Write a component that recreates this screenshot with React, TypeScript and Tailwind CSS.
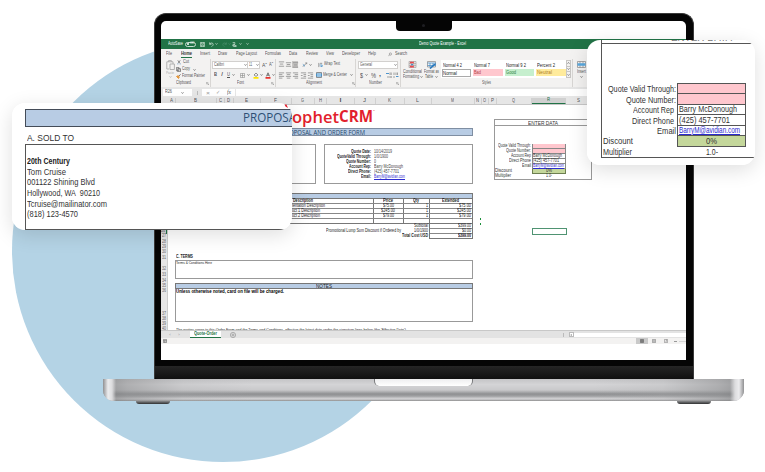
import { useLayoutEffect, useRef } from 'react';
import type { ReactNode } from 'react';

/* One line of text squeezed or stretched to the width of its own box. */
function T({ c, children }: { c: string; children: ReactNode }) {
  const outer = useRef<HTMLSpanElement>(null);
  const inner = useRef<HTMLSpanElement>(null);
  useLayoutEffect(() => {
    const o = outer.current;
    const i = inner.current;
    if (!o || !i) return;
    i.style.transform = 'none';
    const ratio = o.getBoundingClientRect().width / i.getBoundingClientRect().width;
    i.style.transform = `scaleX(${ratio})`;
  });
  return (
    <span ref={outer} className={`block flex-none leading-none ${c}`}>
      <span ref={inner} className="inline-block origin-left whitespace-nowrap align-top">
        {children}
      </span>
    </span>
  );
}

const Caret = ({ c = '' }: { c?: string }) => (
  <svg viewBox="0 0 4 3" className={`h-[2px] w-[3px] flex-none ${c}`} fill="none" stroke="currentColor" strokeWidth="1">
    <path d="M0.5 0.5 2 2.2 3.5 0.5" />
  </svg>
);

const Lines = ({ c = '', d }: { c?: string; d: string }) => (
  <svg viewBox="0 0 8 8" className={`h-[7px] w-[7px] flex-none ${c}`} fill="none" stroke="#888" strokeWidth="0.9">
    <path d={d} />
  </svg>
);

const Launcher = ({ c = '' }: { c?: string }) => (
  <svg viewBox="0 0 4 4" className={`h-[3px] w-[3px] flex-none ${c}`} fill="none" stroke="#888" strokeWidth="0.7">
    <path d="M0.5 3V0.5H3M1.5 1.5 3.5 3.5V2M3.5 3.5H2" />
  </svg>
);

function TitleBar() {
  return (
    <div className="flex h-[10px] flex-none items-center bg-[#217346] text-white">
      <T c="ml-[7px] w-[15px] text-[4.6px]">AutoSave</T>
      <span className="ml-[2px] flex h-[5px] w-[11px] items-center rounded-full border border-[#c8ddd0] pl-[1px]">
        <span className="h-[2px] w-[2px] rounded-full bg-white" />
        <T c="ml-[1px] w-[4px] text-[3.4px]">Off</T>
      </span>
      <svg viewBox="0 0 6 6" className="ml-[4px] h-[5px] w-[5px]" fill="none" stroke="#d3e6da" strokeWidth="0.8">
        <path d="M0.5 0.5H5.5V5.5H0.5ZM1.6 0.5V2.3H4.4V0.5M1.6 5.5V3.7H4.4V5.5" />
      </svg>
      <svg viewBox="0 0 6 6" className="ml-[4px] h-[5px] w-[5px]" fill="none" stroke="#d3e6da" strokeWidth="0.9">
        <path d="M0.8 0.5V2.7H3M0.8 2.7C2 0.5 5 0.7 5 3C5 4 4 5 3 5.7" />
      </svg>
      <Caret c="ml-[1px] text-[#d3e6da]" />
      <svg viewBox="0 0 6 6" className="ml-[4px] h-[5px] w-[5px]" fill="none" stroke="#4f9370" strokeWidth="0.8">
        <path d="M5.2 0.5V2.7H3M5.2 2.7C4 0.5 1 0.7 1 3C1 4 2 5 3 5.7" />
      </svg>
      <Caret c="ml-[1px] text-[#4f9370]" />
      <svg viewBox="0 0 6 6" className="ml-[1px] h-[5px] w-[5px]" fill="none" stroke="#d3e6da" strokeWidth="0.9">
        <path d="M0.8 0.8H3.5V2M2 5.5V2.5H3V4L5 4.2V5.5ZM1 3V5" />
      </svg>
      <Caret c="ml-[2px] text-[#d3e6da]" />
      <Caret c="ml-[4px] text-[#d3e6da]" />
      <T c="ml-[170px] w-[47px] text-[4.6px]">Demo Quote Example  -  Excel</T>
    </div>
  );
}

function MenuTabs() {
  return (
    <div className="flex h-[10px] flex-none items-center bg-[#f3f2f1] text-[4.9px] text-[#555]">
      <T c="ml-[5px] w-[6px]">File</T>
      <span className="ml-[9px] flex h-[8px] items-center border-b border-[#217346] pt-[1px] font-semibold text-[#333]">
        <T c="w-[11px]">Home</T>
      </span>
      <T c="ml-[8px] w-[10px]">Insert</T>
      <T c="ml-[8px] w-[9px]">Draw</T>
      <T c="ml-[9px] w-[21px]">Page Layout</T>
      <T c="ml-[8px] w-[16px]">Formulas</T>
      <T c="ml-[8px] w-[8px]">Data</T>
      <T c="ml-[9px] w-[12px]">Review</T>
      <T c="ml-[8px] w-[8px]">View</T>
      <T c="ml-[8px] w-[18px]">Developer</T>
      <T c="ml-[8px] w-[8px]">Help</T>
      <svg viewBox="0 0 6 6" className="ml-[12px] h-[5px] w-[4px]" fill="none" stroke="#666" strokeWidth="0.7">
        <circle cx="3.6" cy="2.3" r="1.7" />
        <path d="M2.3 3.6 0.4 5.6" />
      </svg>
      <T c="ml-[3px] w-[12px]">Search</T>
    </div>
  );
}

function ClipboardGroup() {
  return (
    <div className="flex w-[50px] flex-none flex-col border-r border-[#d8d6d4]">
      <div className="flex h-[21px]">
        <div className="ml-[5px] flex w-[9px] flex-col items-center">
          <svg viewBox="0 0 9 10" className="mt-[1px] h-[10px] w-[9px]" fill="none" stroke="#aaa" strokeWidth="0.9">
            <path d="M3 9H0.8V1.8H7V4M2.5 1.8V0.6H5.4V1.8M4 4H8.4V9.5H4Z" />
          </svg>
          <T c="mt-[1px] w-[8px] text-[4.4px] text-[#aaa]">Paste</T>
          <Caret c="mt-[1px] text-[#aaa]" />
        </div>
        <div className="ml-[1px] flex flex-col text-[4.8px] text-[#555]">
          <div className="flex h-[7px] items-center">
            <svg viewBox="0 0 5 6" className="ml-[1px] h-[5px] w-[4px]" fill="none" strokeWidth="0.9">
              <path d="M1 0.3 3.6 4M4 0.3 1.4 4" stroke="#666" />
              <path d="M0.6 4.8H1.6M3.4 4.8H4.5" stroke="#2f7cc4" />
            </svg>
            <T c="ml-[2px] w-[6px]">Cut</T>
          </div>
          <div className="flex h-[7px] items-center">
            <svg viewBox="0 0 6 6" className="h-[5px] w-[5px]" fill="none" stroke="#666" strokeWidth="0.9">
              <path d="M0.5 0.5H3.5V4.5H0.5ZM2 2H5.4V5.6H2Z" />
            </svg>
            <T c="ml-[1px] w-[8px]">Copy</T>
            <Caret c="ml-[3px]" />
          </div>
          <div className="flex h-[7px] items-center">
            <svg viewBox="0 0 6 6" className="h-[5px] w-[5px]" fill="none" strokeWidth="1">
              <path d="M0.6 3 3 5.4 4 3.4 2.4 2Z" fill="#f2a33a" stroke="#e08a2a" />
              <path d="M3.3 2.6 5.4 0.5" stroke="#555" />
            </svg>
            <T c="ml-[1px] w-[23px]">Format Painter</T>
          </div>
        </div>
      </div>
      <div className="flex h-[7px] items-center text-[4.6px] text-[#555]">
        <T c="ml-[15px] w-[15px]">Clipboard</T>
        <Launcher c="ml-[15px]" />
      </div>
    </div>
  );
}

function FontGroup() {
  return (
    <div className="flex w-[65px] flex-none flex-col border-r border-[#d8d6d4] text-[4.6px] text-[#555]">
      <div className="mt-[2px] flex h-[8px] items-center">
        <span className="ml-[1px] flex h-[8px] w-[36px] items-center border border-[#d2d0ce] bg-white">
          <T c="ml-[1px] w-[10px]">Calibri</T>
          <Caret c="ml-[20px]" />
        </span>
        <span className="flex h-[8px] w-[12px] items-center border border-l-0 border-[#d2d0ce] bg-white">
          <T c="ml-[1px] w-[3px]">11</T>
          <Caret c="ml-[4px]" />
        </span>
        <T c="ml-[2px] w-[5px] text-[6px]">Aˆ</T>
        <T c="ml-[2px] w-[4px] text-[5.4px]">Aˇ</T>
      </div>
      <div className="mt-[1px] flex h-[10px] items-center">
        <T c="ml-[3px] w-[3px] text-[5.6px] font-bold">B</T>
        <T c="ml-[4px] w-[2px] text-[5.6px] italic">I</T>
        <span className="[&_span]:underline"><T c="ml-[4px] w-[3px] text-[5.6px]">U</T></span>
        <Caret c="ml-[2px]" />
        <svg viewBox="0 0 6 6" className="ml-[5px] h-[5px] w-[5px]" fill="none" stroke="#888" strokeWidth="0.7">
          <path d="M0.5 0.5H5.5V5.5H0.5ZM3 0.5V5.5M0.5 3H5.5" />
        </svg>
        <Caret c="ml-[2px]" />
        <svg viewBox="0 0 6 7" className="ml-[3px] h-[7px] w-[6px]" fill="none" strokeWidth="0.8">
          <path d="M1 3 3 1 5 3 3 4.4Z" stroke="#777" />
          <path d="M0.5 5.8H5.5" stroke="#ffe600" strokeWidth="1.8" />
        </svg>
        <Caret c="ml-[1px]" />
        <svg viewBox="0 0 6 7" className="ml-[2px] h-[7px] w-[6px]" fill="none" strokeWidth="0.8">
          <path d="M1.4 4.4 3 0.8 4.6 4.4M2 3.2H4" stroke="#555" />
          <path d="M0.5 5.8H5.5" stroke="#e8322c" strokeWidth="1.8" />
        </svg>
        <Caret c="ml-[1px]" />
      </div>
      <div className="flex h-[7px] items-center">
        <T c="ml-[26px] w-[7px]">Font</T>
        <Launcher c="ml-[27px]" />
      </div>
    </div>
  );
}

function AlignmentGroup() {
  return (
    <div className="flex w-[80px] flex-none flex-col border-r border-[#d8d6d4] text-[4.7px] text-[#555]">
      <div className="mt-[1px] flex h-[9px] items-center">
        <Lines c="ml-[2px]" d="M1 1H7M2 3.5H6M1 6H7" />
        <Lines d="M1 2H7M2 4H6M1 6H7" />
        <span className="flex h-[7px] w-[6px] items-center bg-[#c8c6c4]">
          <Lines d="M1 2H7M2 4.5H6M1 7H7" />
        </span>
        <svg viewBox="0 0 7 7" className="ml-[4px] h-[6px] w-[6px]" fill="none" strokeWidth="1">
          <path d="M1 5.5 5.5 1M4 1H5.5V2.5" stroke="#888" />
          <path d="M1 2.8 3.4 5" stroke="#3a8ac8" />
        </svg>
        <Caret c="ml-[1px]" />
        <svg viewBox="0 0 6 6" className="ml-[6px] h-[6px] w-[5px]" fill="none" strokeWidth="0.9">
          <path d="M1 0.5V5.5M2.5 1H5" stroke="#777" />
          <path d="M2 3H5V4.8H3" stroke="#3a8ac8" />
        </svg>
        <T c="ml-[1px] w-[16px]">Wrap Text</T>
      </div>
      <div className="mt-[1px] flex h-[10px] items-center">
        <Lines c="ml-[2px]" d="M1 1H7M1 3H5M1 5H7M1 7H5" />
        <Lines d="M1 1H7M2 3H6M1 5H7M2 7H6" />
        <Lines d="M1 1H7M3 3H7M1 5H7M3 7H7" />
        <Lines c="ml-[1px]" d="M1 1H7M4 3H7M4 5H7M1 7H7M3 4H1" />
        <Lines d="M1 1H7M4 3H7M4 5H7M1 7H7M1 4H3" />
        <svg viewBox="0 0 6 6" className="ml-[2px] h-[6px] w-[6px]" fill="#cfe6f7" strokeWidth="0.8">
          <path d="M0.5 0.5H5.5V5.5H0.5Z" stroke="#777" />
          <path d="M0.5 2H5.5V4H0.5Z" stroke="#3a8ac8" />
        </svg>
        <T c="ml-[1px] w-[24px]">Merge & Center</T>
        <Caret c="ml-[3px]" />
      </div>
      <div className="flex h-[7px] items-center">
        <T c="ml-[30px] w-[16px]">Alignment</T>
        <Launcher c="ml-[30px]" />
      </div>
    </div>
  );
}

function NumberGroup() {
  return (
    <div className="flex w-[45px] flex-none flex-col border-r border-[#d8d6d4] text-[4.6px] text-[#555]">
      <div className="mt-[2px] flex h-[8px] items-center">
        <span className="ml-[2px] flex h-[8px] w-[40px] items-center border border-[#d2d0ce] bg-white">
          <T c="ml-[1px] w-[12px]">General</T>
          <Caret c="ml-[22px]" />
        </span>
      </div>
      <div className="mt-[1px] flex h-[10px] items-center">
        <T c="ml-[4px] w-[3px] text-[7px]">$</T>
        <Caret c="ml-[2px]" />
        <T c="ml-[3px] w-[5px] text-[7px]">%</T>
        <T c="ml-[3px] mb-[3px] w-[2px] text-[8px] font-bold">,</T>
        <svg viewBox="0 0 13 6" className="ml-[5px] h-[6px] w-[13px]" fill="none" strokeWidth="0.9">
          <path d="M0 1.5H3M10 4.5H12.5" stroke="#3a8ac8" />
          <path d="M4 0.5V3M5.2 0.5V3M2 4V6M4 4V6M5.2 4V6M8 0.5V3M10 0.5V3M11.5 0.5V3M8 4V6" stroke="#999" />
        </svg>
      </div>
      <div className="flex h-[7px] items-center">
        <T c="ml-[13px] w-[13px]">Number</T>
        <Launcher c="ml-[14px]" />
      </div>
    </div>
  );
}

function StylesGroup() {
  return (
    <div className="flex w-[172px] flex-none flex-col border-r border-[#d8d6d4] text-[4.6px] text-[#555]">
      <div className="flex h-[21px]">
        <div className="ml-[2px] flex w-[20px] flex-col items-center">
          <svg viewBox="0 0 9 8" className="mt-[2px] h-[7px] w-[9px] flex-none" fill="none" strokeWidth="0.6">
            <path d="M0.5 0.5H8.5V7.5H0.5ZM3 0.5V7.5M6 0.5V7.5M0.5 3H8.5M0.5 5.3H8.5" stroke="#888" />
            <path d="M1.5 1.7H6M1.5 6.4H6" stroke="#ea4a4f" strokeWidth="1.9" />
            <path d="M3 4.1H5" stroke="#3a8ac8" strokeWidth="1.6" />
          </svg>
          <T c="mt-[2px] w-[19px]">Conditional</T>
          <span className="flex items-center">
            <T c="w-[16px]">Formatting</T>
            <Caret c="ml-[1px]" />
          </span>
        </div>
        <div className="ml-[1px] flex w-[16px] flex-col items-center">
          <svg viewBox="0 0 9 8" className="mt-[2px] h-[8px] w-[9px] flex-none" fill="none" strokeWidth="0.7">
            <path d="M0.5 0.5H8.5V6H0.5Z" stroke="#888" />
            <path d="M0.5 2H8.5V4.5H0.5M3 2V6M6 2V6" stroke="#3a8ac8" />
            <path d="M3 7.5 8 3" stroke="#2777bd" strokeWidth="1.6" />
          </svg>
          <T c="mt-[1px] w-[15px]">Format as</T>
          <span className="flex items-center">
            <T c="w-[8px]">Table</T>
            <Caret c="ml-[2px]" />
          </span>
        </div>
        <div className="ml-[1px] mt-[1px] grid h-[18px] w-[125px] grid-cols-4 grid-rows-2 gap-x-[2px] bg-white py-[1px] pl-[1px] text-[5px] text-[#222]">
          <span className="flex items-center pl-[1px]"><T c="w-[19px]">Normal 4 2</T></span>
          <span className="flex items-center pl-[1px]"><T c="w-[16px]">Normal 7</T></span>
          <span className="flex items-center pl-[1px]"><T c="w-[20px]">Normal 9 2</T></span>
          <span className="flex items-center pl-[1px]"><T c="w-[18px]">Percent 2</T></span>
          <span className="flex items-center border border-[#aaa]"><T c="w-[14px]">Normal</T></span>
          <span className="mb-[1px] flex items-center bg-[#ffc7ce] pl-[1px] text-[#b33c46]"><T c="w-[7px]">Bad</T></span>
          <span className="mb-[1px] flex items-center bg-[#c6efce] pl-[1px] text-[#2f8040]"><T c="w-[10px]">Good</T></span>
          <span className="mb-[1px] flex items-center bg-[#ffeb9c] pl-[1px] text-[#b07d24]"><T c="w-[15px]">Neutral</T></span>
        </div>
        <div className="mt-[1px] flex h-[18px] w-[5px] flex-col divide-y divide-[#c8c6c4] border border-[#c8c6c4]">
          <span className="flex flex-1 items-center justify-center"><Caret c="rotate-180" /></span>
          <span className="flex flex-1 items-center justify-center"><Caret /></span>
          <span className="flex flex-1 items-center justify-center"><Caret /></span>
        </div>
      </div>
      <div className="flex h-[7px] items-center">
        <T c="ml-[81px] w-[9px]">Styles</T>
      </div>
    </div>
  );
}

function Ribbon() {
  return (
    <div className="flex h-[28px] flex-none overflow-hidden bg-[#f3f2f1]">
      <ClipboardGroup />
      <FontGroup />
      <AlignmentGroup />
      <NumberGroup />
      <StylesGroup />
      <div className="ml-[4px] flex w-[10px] flex-col items-center text-[4.8px] text-[#555]">
        <svg viewBox="0 0 9 7" className="mt-[2px] h-[7px] w-[9px]" fill="none" strokeWidth="0.7">
          <path d="M0.5 0.5H8.5V6.5H0.5ZM3 0.5V6.5M6 0.5V6.5" stroke="#888" />
          <path d="M0.5 3.5H8.5" stroke="#58a9e0" strokeWidth="2.5" />
        </svg>
        <T c="mt-[2px] w-[9px]">Insert</T>
        <Caret c="mt-[1px]" />
      </div>
    </div>
  );
}

function FormulaBar() {
  return (
    <div className="flex h-[11px] flex-none items-center bg-[#e6e6e6] text-[4.6px] text-[#555]">
      <span className="ml-[2px] flex h-[7px] w-[29px] items-center bg-white">
        <T c="ml-[2px] w-[7px]">R26</T>
        <Caret c="ml-[9px]" />
      </span>
      <span className="ml-[5px] h-[4px] w-px bg-[#bbb]" />
      <span className="ml-[4px] flex h-[7px] w-[33px] items-center bg-white text-[#999]">
        <T c="ml-[4px] w-[4px] text-[6px]">×</T>
        <T c="ml-[6px] w-[4px] text-[5px]">✓</T>
        <span className="font-['Liberation_Serif',serif] italic text-[#555]"><T c="ml-[7px] w-[4px] text-[5.6px]">fx</T></span>
      </span>
      <span className="ml-px h-[7px] flex-1 bg-white" />
    </div>
  );
}

const columns: [string, string][] = [
  ['A', 'w-[8px]'], ['B', 'w-[41px]'], ['C', 'w-[8px]'], ['D', 'w-[9px]'], ['E', 'w-[27px]'],
  ['F', 'w-[31px]'], ['G', 'w-[23px]'], ['H', 'w-[12px]'], ['I', 'w-[28px]'], ['J', 'w-[21px]'],
  ['K', 'w-[29px]'], ['L', 'w-[27px]'], ['M', 'w-[43px]'], ['N', 'w-[7px]'], ['O', 'w-[7px]'],
  ['P', 'w-[8px]'], ['Q', 'w-[35px]'], ['R', 'w-[34px]'], ['S', 'w-[26px]'], ['T', 'w-[40px]'],
];

function ColumnHeader() {
  return (
    <div className="flex h-[7px] flex-none border-b border-[#c8c8c8] bg-[#e6e6e6] pl-[7px] text-[4.8px] text-[#555]">
      {columns.map(([name, w]) => (
        <span
          key={name}
          className={`flex flex-none items-center justify-center border-r border-[#d0d0d0] ${w} ${
            name === 'R' ? 'border-b border-b-[#217346] bg-[#d0d0d0] text-[#217346]' : ''
          }`}
        >
          <T c="w-[3px]">{name}</T>
        </span>
      ))}
    </div>
  );
}

const rowNumbers: [number, string][] = [
  [25, 'h-[124px]'], [26, 'h-[5px]'], [27, 'h-[5px]'], [28, 'h-[6px]'], [29, 'h-[5px]'], [30, 'h-[5px]'],
  [31, 'h-[6px]'], [32, 'h-[11px]'], [33, 'h-[6px]'], [34, 'h-[6px]'], [35, 'h-[5px]'], [36, 'h-[5px]'],
  [37, 'h-[23px]'], [38, 'h-[5px]'], [39, 'h-[5px]'], [40, 'h-[5px]'],
];

const quoteInfo: [string, string, string, string][] = [
  ['Quote Date:', 'w-[20px]', '10/14/2019', 'w-[18px]'],
  ['QuoteValid Through:', 'w-[34px]', '1/0/1900', 'w-[14px]'],
  ['Quote Number:', 'w-[25px]', '0', 'w-[2px]'],
  ['Account Rep:', 'w-[22px]', 'Barry McDonough', 'w-[29px]'],
  ['Direct Phone:', 'w-[23px]', '(425) 457-7701', 'w-[25px]'],
  ['Email:', 'w-[10px]', 'BarryM@avidian.com', 'w-[31px]'],
];

const items: [string, string, string, string][] = [
  ['Implementation Description', '$75.00', '1', '$75.00'],
  ['Product 1 Description', '$245.00', '1', '$245.00'],
  ['Product 2 Description', '$79.00', '1', '$79.00'],
];

function OrderForm() {
  return (
    <div className="flex w-[298px] flex-none flex-col text-[4.7px] text-[#222]">
      <div className="flex h-[23px] flex-none items-center pl-[117px] font-['Open_Sans',sans-serif] text-[#e21f2d]">
        <T c="mt-[1px] w-[47px] text-[16px] font-semibold">ophet</T>
        <T c="mt-[1px] w-[34px] text-[15.5px] font-bold">CRM</T>
        <T c="mb-[9px] w-[2px] text-[2px]">™</T>
      </div>
      <div className="flex h-[8px] flex-none items-center justify-center border border-[#7f8ea2] bg-[#b8cce4] font-['Open_Sans',sans-serif] text-[#24466b]">
        <T c="w-[83px] text-[7px]">PROPOSAL AND ORDER FORM</T>
      </div>
      <div className="mt-[8px] flex h-[40px] flex-none gap-[8px]">
        <div className="w-[141px] border border-[#999]" />
        <div className="w-[149px] border border-[#999] pt-[5px]">
          {quoteInfo.map(([label, lw, value, vw], n) => (
            <div key={label} className="flex h-[5px] items-center">
              <span className="flex w-[46px] justify-end font-bold"><T c={lw}>{label}</T></span>
              <span className={`ml-[3px] ${n === 5 ? 'text-[#2b2bd0] [&_span]:underline' : 'text-[#444]'}`}><T c={vw}>{value}</T></span>
            </div>
          ))}
        </div>
      </div>
      <div className="mt-[9px] flex h-[31px] flex-none flex-col border border-[#777]">
        <div className="h-[5px] flex-none border-b border-[#777] bg-[#b8cce4]" />
        <div className="flex h-[5px] flex-none border-b border-[#888] font-bold">
          <span className="flex w-[198px] items-center justify-end border-r border-[#777] pr-[60px]"><T c="w-[20px]">Description</T></span>
          <span className="flex w-[30px] items-center justify-center border-r border-[#777]"><T c="w-[10px]">Price</T></span>
          <span className="flex w-[26px] items-center justify-center border-r border-[#777]"><T c="w-[6px]">Qty</T></span>
          <span className="flex flex-1 items-center justify-center"><T c="w-[17px]">Extended</T></span>
        </div>
        {items.map(([name, price, qty, total], n) => (
          <div key={name} className="flex h-[5px] flex-none border-b border-[#888]">
            <span className="flex w-[198px] items-center border-r border-[#777] pl-[105px]">
              <T c={n === 0 ? 'w-[44px]' : 'ml-[3px] w-[36px]'}>{name}</T>
            </span>
            <span className="flex w-[30px] items-center justify-center border-r border-[#777]"><T c={n === 1 ? 'w-[14px]' : 'w-[11px]'}>{price}</T></span>
            <span className="flex w-[26px] items-center justify-end border-r border-[#777] pr-[1px]"><T c="w-[2px]">{qty}</T></span>
            <span className="flex flex-1 items-center justify-end pr-[1px]"><T c={n === 1 ? 'w-[14px]' : 'w-[12px]'}>{total}</T></span>
          </div>
        ))}
        <div className="flex flex-1">
          <span className="w-[198px] border-r border-[#777]" />
          <span className="w-[30px] border-r border-[#777]" />
          <span className="w-[26px] border-r border-[#777]" />
        </div>
      </div>
      <div className="flex h-[15px] flex-none justify-end">
        <div className="flex flex-col items-end pr-[1px]">
          <span className="flex h-[5px] items-center"><T c="w-[14px]">Subtotal</T></span>
          <span className="flex h-[5px] items-center">
            <T c="w-[75px]">Promotional Lump Sum Discount if Ordered by</T>
            <T c="ml-[13px] w-[14px]">1/0/1900</T>
          </span>
          <span className="flex h-[5px] items-center font-bold"><T c="w-[26px]">Total Cost USD</T></span>
        </div>
        <div className="flex w-[44px] flex-col border-x border-[#777]">
          <span className="flex h-[5px] items-center justify-end border-b border-[#888] pr-[1px]"><T c="w-[13px]">$399.00</T></span>
          <span className="flex h-[5px] items-center justify-end border-b border-[#888] pr-[1px]"><T c="w-[9px]">$0.00</T></span>
          <span className="flex h-[5px] items-center justify-end border-b border-[#777] pr-[1px] font-bold"><T c="w-[13px]">$399.00</T></span>
        </div>
      </div>
      <div className="mt-[16px] flex h-[5px] flex-none items-center font-bold"><T c="ml-[1px] w-[17px]">C. TERMS</T></div>
      <div className="h-[19px] flex-none border border-[#999]"><T c="w-[36px] text-[4.4px]">Terms & Conditions Here</T></div>
      <div className="mt-[4px] flex h-[6px] flex-none items-center justify-center border border-[#777] bg-[#b8cce4]">
        <T c="w-[16px] text-[6px]">NOTES</T>
      </div>
      <div className="h-[33px] flex-none border border-t-0 border-[#999] font-bold text-black">
        <T c="w-[108px] text-[5.2px]">Unless otherwise noted, card on file will be charged.</T>
      </div>
      <div className="mt-[6px] h-[3px] flex-none overflow-hidden">
        <T c="ml-[1px] w-[231px] text-[4.2px]">
          The parties agree to this Order Form and the Terms and Conditions, effective the latest date under the signature lines below (the 'Effective Date').
        </T>
      </div>
    </div>
  );
}

const enterRows: [string, string, string, string][] = [
  ['Quote Valid Through:', 'w-[33px]', '', ''],
  ['Quote Number:', 'w-[25px]', '', ''],
  ['Account Rep', 'w-[20px]', 'Barry McDonough', 'w-[29px]'],
  ['Direct Phone', 'w-[22px]', '(425) 457-7701', 'w-[26px]'],
  ['Email', 'w-[9px]', 'BarryM@avidian.com', 'w-[31px]'],
];

function EnterData() {
  return (
    <div className="flex flex-col">
      <div className="mt-[14px] flex h-[61px] w-[98px] flex-none flex-col border border-[#999] text-[4.7px] text-[#333]">
        <div className="flex h-[6px] flex-none items-center justify-center border-b border-[#999]">
          <T c="w-[30px] text-[6px]">ENTER DATA</T>
        </div>
        <div className="mt-[18px] flex flex-col">
          {enterRows.map(([label, lw, value, vw], n) => (
            <div key={label} className="flex h-[5px] items-center">
              <span className="flex w-[37px] justify-end pr-px"><T c={lw}>{label}</T></span>
              <span
                className={`flex h-[5px] w-[34px] items-center border border-t-0 border-[#888] ${
                  n < 2 ? 'bg-[#ffc7ce]' : n === 4 ? 'text-[#2b2bd0] [&_span]:underline' : ''
                }`}
              >
                {value && <T c={vw}>{value}</T>}
              </span>
            </div>
          ))}
          <div className="flex h-[5px] items-center">
            <span className="w-[37px]"><T c="w-[17px]">Discount</T></span>
            <span className="flex h-[5px] w-[34px] items-center justify-center border border-t-0 border-[#6d7f50] bg-[#c4d79b]"><T c="w-[6px]">0%</T></span>
          </div>
          <div className="flex h-[5px] items-center">
            <span className="w-[37px]"><T c="w-[16px]">Multiplier</T></span>
            <span className="flex w-[34px] justify-center"><T c="w-[6px]">1.0-</T></span>
          </div>
        </div>
      </div>
      <div className="ml-[38px] mt-[48px] h-[7px] w-[35px] border border-[#4f9372]" />
    </div>
  );
}

function Sheet() {
  return (
    <div className="flex h-[225px] flex-none overflow-hidden bg-white">
      <div className="flex w-[7px] flex-none flex-col overflow-hidden border-r border-[#ccc] bg-[#e6e6e6] text-[4.6px] text-[#666]">
        {rowNumbers.map(([n, h]) => (
          <span key={n} className={`flex flex-none items-end justify-center ${h} ${n === 26 ? 'border-r border-[#217346] bg-[#d2d2d2]' : ''}`}>
            <T c="w-[4px]">{n}</T>
          </span>
        ))}
      </div>
      <div className="w-[7px] flex-none" />
      <OrderForm />
      <div className="ml-[7px] flex w-[14px] flex-none flex-col pt-[113px]">
        <span className="h-[2px] w-px bg-[#1a8f3a]" />
        <span className="mt-[3px] h-[2px] w-px bg-[#1a8f3a]" />
      </div>
      <EnterData />
    </div>
  );
}

function SheetTabs() {
  return (
    <div className="flex h-[8px] flex-none items-center border-t border-[#c8c8c8] bg-[#e3e3e3] text-[#aaa]">
      <T c="ml-[8px] w-[2px] text-[4px]">‹</T>
      <T c="ml-[7px] w-[2px] text-[4px]">›</T>
      <span className="ml-[10px] flex h-[7px] w-[31px] items-center justify-center border-b border-[#217346] bg-white font-bold text-[#217346]">
        <T c="w-[23px] text-[4.8px]">Quote-Order</T>
      </span>
      <svg viewBox="0 0 6 6" className="ml-[9px] h-[6px] w-[6px]" fill="none" stroke="#888" strokeWidth="0.6">
        <circle cx="3" cy="3" r="2.6" />
        <path d="M3 1.5V4.5M1.5 3H4.5" />
      </svg>
      <span className="ml-[327px] h-[4px] w-px bg-[#bbb]" />
      <span className="ml-[5px] flex h-[5px] w-[5px] items-center justify-center border border-[#bbb] bg-white">
        <svg viewBox="0 0 3 3" className="h-[2px] w-[2px]" fill="#777"><path d="M2.5 0V3L0.5 1.5Z" /></svg>
      </span>
      <span className="h-[4px] flex-1 bg-white" />
    </div>
  );
}

function StatusBar() {
  return (
    <div className="flex h-[6px] flex-none items-center bg-[#f3f2f1]">
      <svg viewBox="0 0 5 5" className="ml-[2px] h-[4px] w-[4px]" fill="none" stroke="#777" strokeWidth="0.9">
        <path d="M0.5 0.5H4.5V4.5H0.5ZM0.5 2H4.5M2 2V4.5M3.5 3V4" />
      </svg>
      <span className="ml-[469px] flex h-[6px] w-[12px] items-center justify-center bg-[#c9c9c9]">
        <svg viewBox="0 0 5 5" className="h-[4px] w-[4px]" fill="#999" stroke="#666" strokeWidth="0.8"><path d="M0.5 0.5H4.5V4.5H0.5ZM0.5 2.5H4.5M2.5 0.5V4.5" /></svg>
      </span>
      <svg viewBox="0 0 5 5" className="ml-[4px] h-[4px] w-[4px]" fill="#ccc" stroke="#888" strokeWidth="0.8"><path d="M0.5 0.5H4.5V4.5H0.5ZM1.5 2.5H3.5" /></svg>
      <svg viewBox="0 0 5 5" className="ml-[8px] h-[4px] w-[4px]" fill="none" stroke="#888" strokeWidth="0.8"><path d="M0.5 0.5H4.5V4.5H0.5ZM3 0.5V3H2" /></svg>
      <span className="ml-[6px] h-px w-[3px] bg-[#999]" />
      <span className="ml-[2px] h-px flex-1 bg-[#d5d5d5]" />
    </div>
  );
}

function Laptop() {
  return (
    <div className="absolute left-[103px] top-[13px] flex w-[641px] flex-col items-center">
      <div className="relative h-[366px] w-[540px] overflow-hidden rounded-t-[12px] border-x border-t border-[#3a3a3a] bg-[#050505]">
        <div className="ml-[6px] mt-[7px] flex h-[339px] w-[525px] flex-col overflow-hidden rounded-t-[5px] bg-white pt-[18px]">
          <TitleBar />
          <MenuTabs />
          <Ribbon />
          <FormulaBar />
          <ColumnHeader />
          <Sheet />
          <SheetTabs />
          <StatusBar />
        </div>
        <div className="mt-[6px] h-[13px] rounded-b-[3px] bg-linear-to-b from-[#252525] to-[#101010]" />
        <div className="absolute left-[241px] top-[6px] flex h-[11px] w-[56px] items-center justify-center rounded-b-[4px] bg-[#050505]">
          <span className="h-[3px] w-[3px] rounded-full bg-[#1e1e22]" />
        </div>
      </div>
      <div className="relative flex h-[22px] w-full justify-center overflow-hidden rounded-b-[11px] bg-[linear-gradient(to_bottom,#c4c4c6_0%,#d4d4d6_25%,#c9c9cb_50%,#8e8f91_68%,#a0a1a3_78%,#cfcfd1_88%,#bdbdbf_95%,#858585_100%)]">
        <div className="absolute inset-0 bg-[linear-gradient(to_right,#909092_0px,#ececee_5px,#dcdcde_9px,#85868899_13px,#8f909288_24px,#a9aaac33_80px,transparent_150px,transparent_490px,#a9aaac33_560px,#8f909288_615px,#85868899_627px,#dcdcde_632px,#ececee_636px,#909092_641px)]" />
        <div className="relative h-[7px] w-[99px] rounded-b-[5px] border-x border-[#77787a] bg-linear-to-b from-[#eeeeef] to-white" />
      </div>
      <div className="flex w-full justify-between px-[33px]">
        <span className="h-[3px] w-[34px] rounded-b-[3px] bg-linear-to-b from-[#8b8c8e] to-[#303132]" />
        <span className="h-[3px] w-[34px] rounded-b-[3px] bg-linear-to-b from-[#8b8c8e] to-[#303132]" />
      </div>
    </div>
  );
}

function SoldToCard() {
  return (
    <div className="absolute left-[12px] top-[103px] flex h-[127px] w-[280px] flex-col overflow-hidden rounded-[13px] bg-white pl-[13px] text-[9px] text-[#333]">
      <div className="mt-[6px] flex h-[18px] flex-none items-center border border-r-0 border-[#444c58] bg-[#b8cce4] font-['Open_Sans',sans-serif] text-[#2d4f75]">
        <T c="ml-[217px] w-[53px] text-[13.4px]">PROPOSA</T>
      </div>
      <div className="flex h-[17px] flex-none items-center"><T c="ml-[2px] mt-[5px] w-[47px] text-[9.6px]">A. SOLD TO</T></div>
      <div className="flex flex-1 flex-col border border-r-0 border-[#555] pl-[1px] pt-[11px]">
        <span className="flex h-[11px] items-center font-bold text-[#1a1a1a]"><T c="w-[43px]">20th Century</T></span>
        <span className="flex h-[10px] items-center"><T c="w-[39px]">Tom Cruise</T></span>
        <span className="flex h-[11px] items-center"><T c="w-[68px]">001122 Shining Blvd</T></span>
        <span className="flex h-[11px] items-center"><T c="w-[73px]">Hollywood, WA&nbsp; 90210</T></span>
        <span className="flex h-[10px] items-center"><T c="w-[80px]">Tcruise@mailinator.com</T></span>
        <span className="flex h-[11px] items-center"><T c="w-[51px]">(818) 123-4570</T></span>
      </div>
    </div>
  );
}

const cardRows: [string, string, string, string, string][] = [
  ['Quote Valid Through:', 'w-[68px]', '', '', 'h-[11px]'],
  ['Quote Number:', 'w-[50px]', '', '', 'h-[11px]'],
  ['Account Rep', 'w-[41px]', 'Barry McDonough', 'w-[58px]', 'h-[10px]'],
  ['Direct Phone', 'w-[42px]', '(425) 457-7701', 'w-[51px]', 'h-[11px]'],
  ['Email', 'w-[19px]', 'BarryM@avidian.com', 'w-[61px]', 'h-[10px]'],
];

function EnterDataCard() {
  return (
    <div className="absolute left-[587px] top-[40px] flex h-[125px] w-[168px] flex-col overflow-hidden rounded-[13px] bg-white text-[8.8px] text-[#333]">
      <div className="ml-[14px] h-[118px] border-b border-l border-[#555]">
        <div className="flex h-[4px] w-[150px] flex-none items-end overflow-hidden border-b border-[#555] text-[#777]">
          <T c="ml-[69px] w-[61px] text-[9px]">ENTER DATA</T>
        </div>
        <div className="mt-[39px] flex flex-col">
          {cardRows.map(([label, lw, value, vw, h], n) => (
            <div key={label} className={`flex items-center ${h}`}>
              <span className={`flex w-[75px] justify-end pt-px ${n === 2 || n === 3 ? 'pr-[3px]' : 'pr-[1px]'}`}><T c={lw}>{label}</T></span>
              <span
                className={`flex h-full w-[69px] items-center border-x border-b border-[#555] pl-[1px] ${
                  n < 2 ? 'bg-[#ffc7ce]' : n === 4 ? 'text-[#2b2bd0] [&_span]:underline' : ''
                } ${n === 0 ? 'border-t' : ''}`}
              >
                {value && <T c={vw}>{value}</T>}
              </span>
            </div>
          ))}
          <div className="flex h-[11px] items-center">
            <span className="w-[75px] pl-[1px]"><T c="w-[30px]">Discount</T></span>
            <span className="flex h-full w-[69px] items-center justify-center border-x border-b border-[#555] bg-[#c4d79b]"><T c="w-[11px]">0%</T></span>
          </div>
          <div className="flex h-[10px] items-center">
            <span className="w-[75px] pl-[1px]"><T c="w-[29px]">Multiplier</T></span>
            <span className="flex w-[69px] justify-center"><T c="w-[12px]">1.0-</T></span>
          </div>
        </div>
      </div>
    </div>
  );
}

export default function App() {
  return (
    <main className="relative h-[472px] w-[765px] overflow-hidden bg-white font-['Liberation_Sans',Arial,sans-serif]">
      <div className="absolute left-[12px] top-[40px] h-[422px] w-[422px] rounded-full bg-[#b4d3e5]" />
      <Laptop />
      <div className="absolute left-[12px] top-[103px] h-[127px] w-[280px] rounded-[13px] shadow-[0_5px_20px_rgba(0,0,0,0.13)]" />
      <SoldToCard />
      {/* Tip of the logo mark that peeks over the card's corner */}
      <svg viewBox="0 0 4 4" className="absolute left-[284px] top-[104px] h-[4px] w-[4px]" fill="#e21f2d">
        <path d="M0.5 0.5H2.5L4 4L1.5 2.5Z" />
      </svg>
      <div className="absolute left-[587px] top-[40px] h-[125px] w-[168px] rounded-[13px] shadow-[0_5px_20px_rgba(0,0,0,0.13)]" />
      <EnterDataCard />
    </main>
  );
}
